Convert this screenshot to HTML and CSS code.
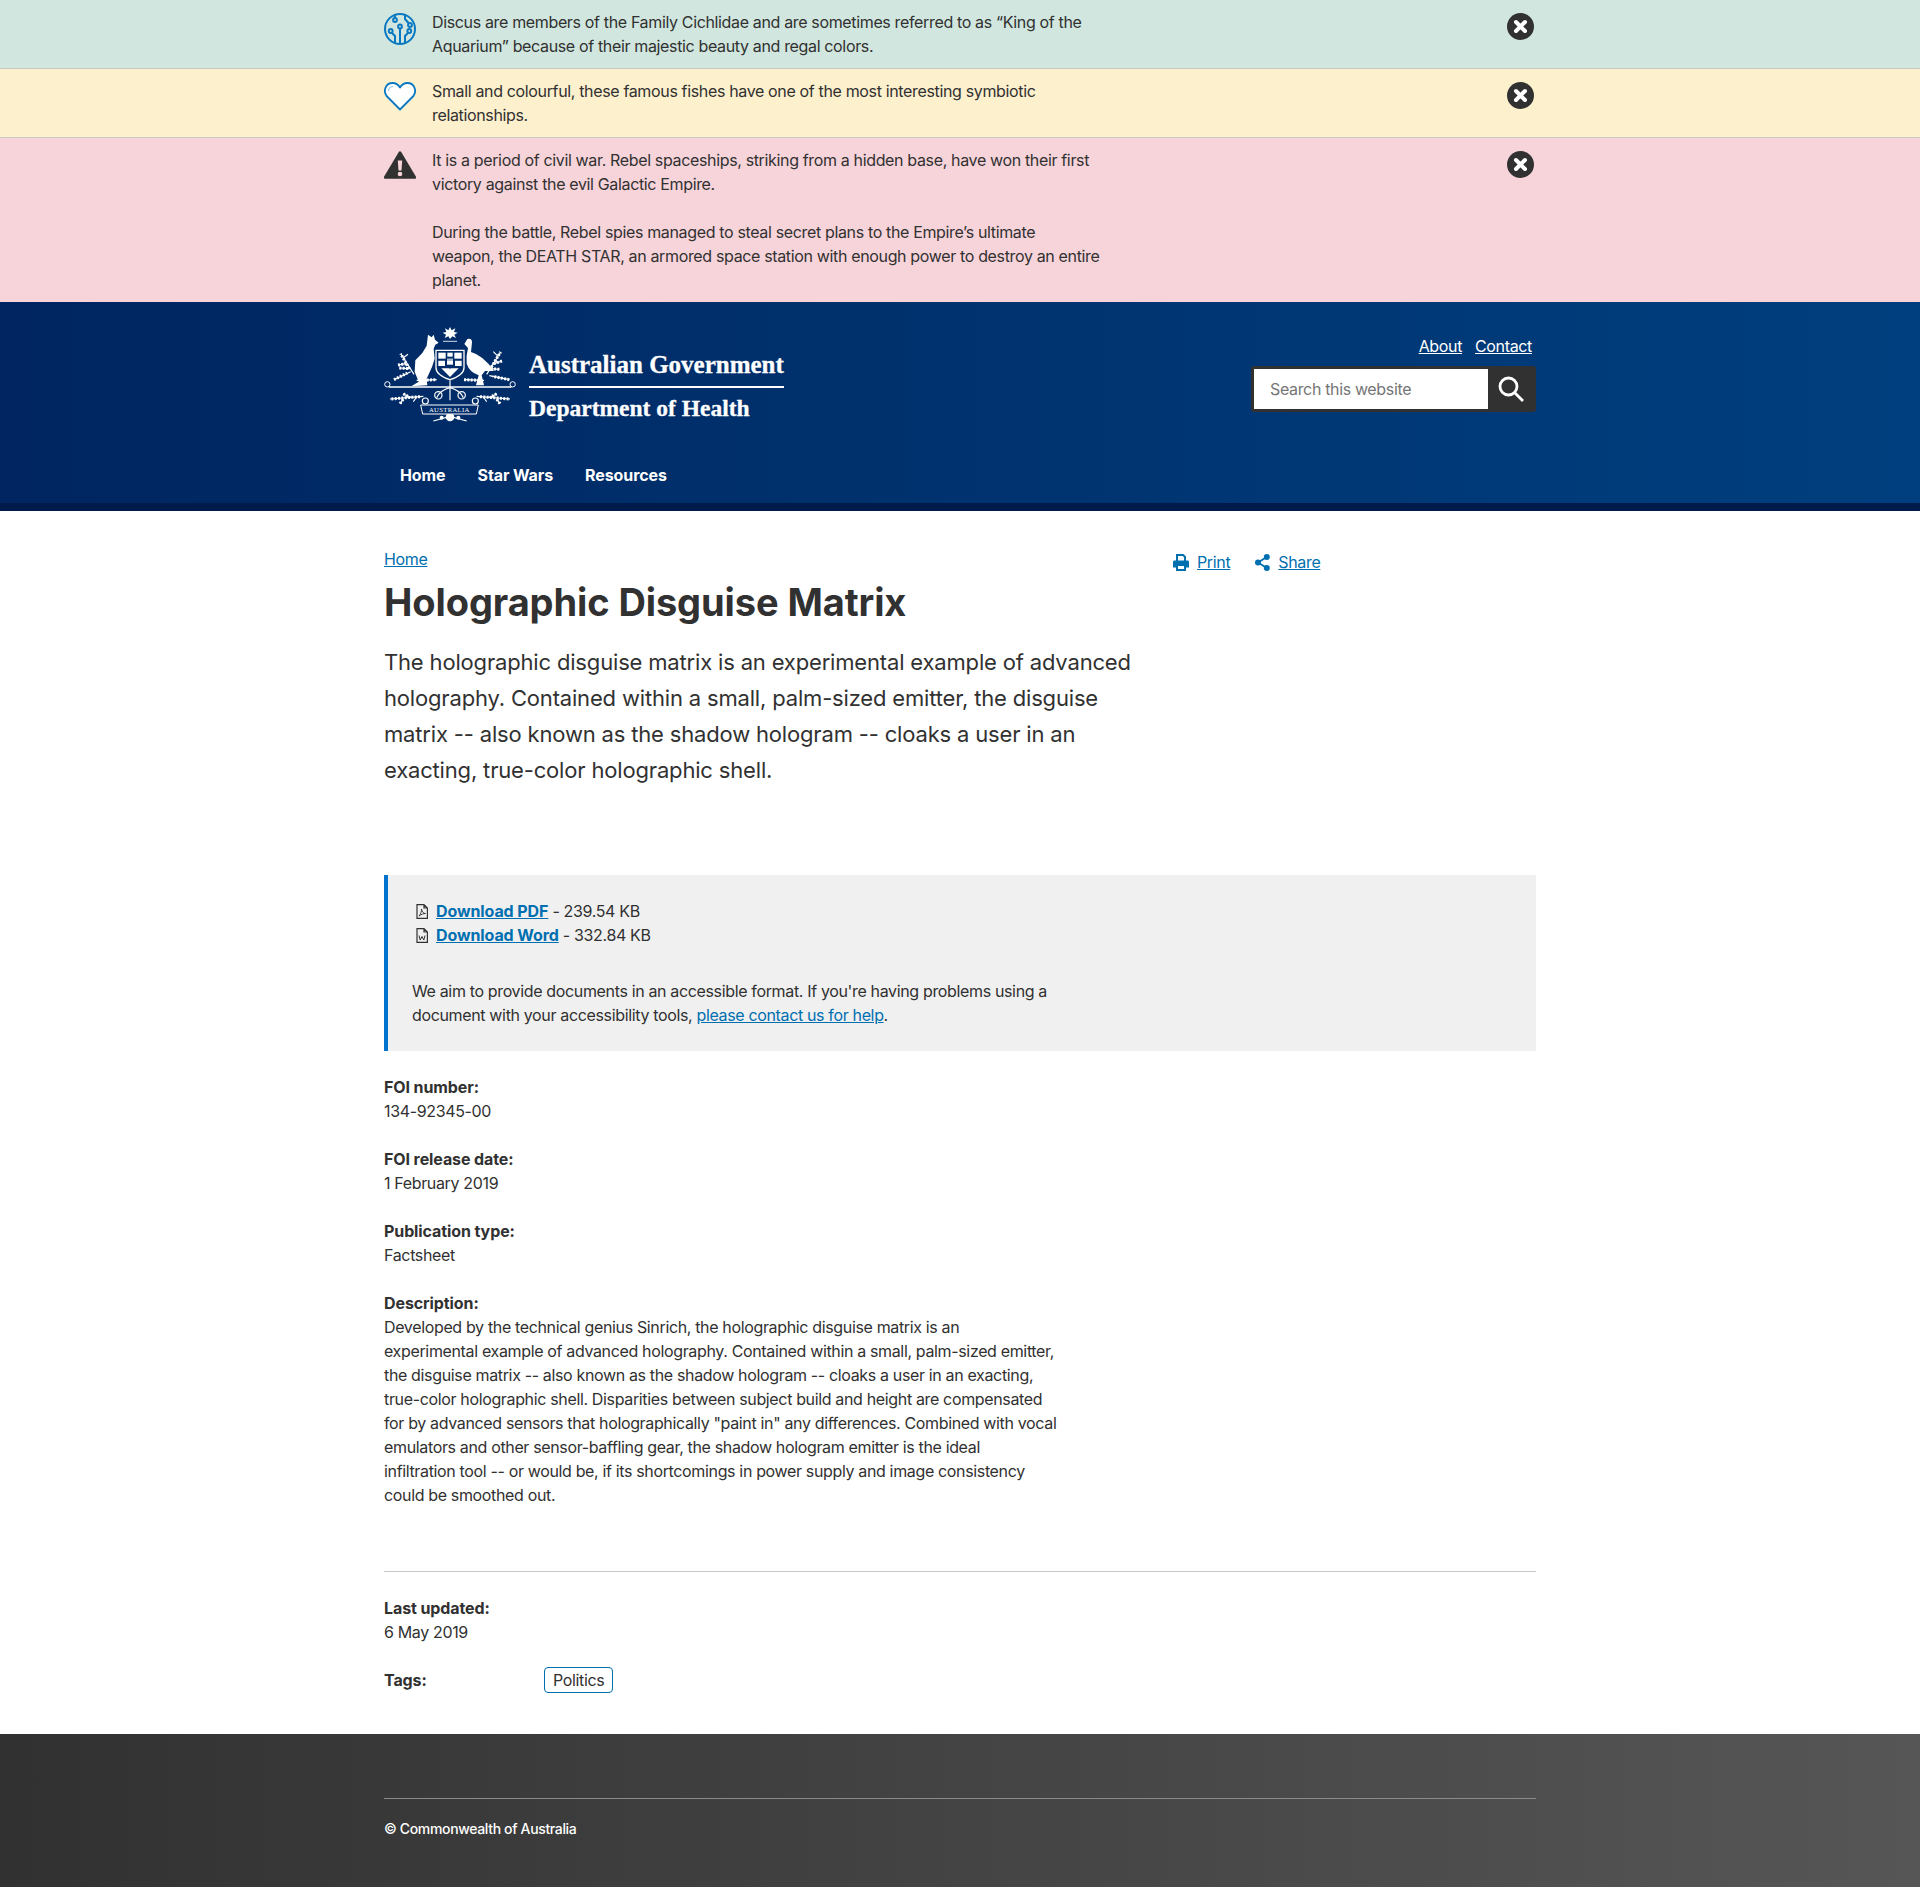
FILE: index.html
```html
<!DOCTYPE html>
<html lang="en">
<head>
    <meta charset="UTF-8">
    <meta name="viewport" content="width=device-width, initial-scale=1.0">
    <title>Holographic Disguise Matrix</title>
    <link rel="stylesheet" href="styles.css">
</head>
<body>

    <div class="alert alert-green">
        <div class="container alert-row">
            <svg class="alert-icon" viewBox="0 0 32 32" fill="none" stroke="#0b78c2" stroke-width="2">
                <circle cx="16" cy="16" r="15"/>
                <path d="M16 15v16M11 30V23l-3-3M21 30V23l3-3M11 1v4M21 1v5l3.500 4"/>
                <circle cx="16" cy="13.500" r="1.900"/><circle cx="6.700" cy="18" r="1.900"/><circle cx="25.300" cy="18" r="1.900"/>
                <circle cx="11" cy="7" r="1.900"/><circle cx="26" cy="12" r="1.900"/>
            </svg>
            <div class="alert-text">
                <p>Discus are members of the Family Cichlidae and are sometimes referred to as “King of the Aquarium” because of their majestic beauty and regal colors.</p>
            </div>
            <svg class="alert-close" viewBox="0 0 27 27"><circle cx="13.500" cy="13.500" r="13.500" fill="#313131"/><path d="M9 9l9 9M18 9l-9 9" stroke="#fff" stroke-width="4" stroke-linecap="round"/></svg>
        </div>
    </div>

    <div class="alert alert-yellow">
        <div class="container alert-row">
            <svg class="alert-icon" viewBox="0 0 32 32">
                <path d="M16 27.500L2.600 14C-1 9 1.500 1 8.500 1c3.500 0 6 2 7.500 4.500C17.500 3 20 1 23.500 1c7 0 9.500 8 5.900 13Z" fill="#fff" stroke="#0b78c2" stroke-width="1.800" stroke-linejoin="round"/>
                <path d="M4.500 9c0-2.500 2-4.500 4.500-4.500" fill="none" stroke="#8fc4e6" stroke-width="1.200"/>
            </svg>
            <div class="alert-text">
                <p>Small and colourful, these famous fishes have one of the most interesting symbiotic relationships.</p>
            </div>
            <svg class="alert-close" viewBox="0 0 27 27"><circle cx="13.500" cy="13.500" r="13.500" fill="#313131"/><path d="M9 9l9 9M18 9l-9 9" stroke="#fff" stroke-width="4" stroke-linecap="round"/></svg>
        </div>
    </div>

    <div class="alert alert-red">
        <div class="container alert-row">
            <svg class="alert-icon" viewBox="0 0 32 32">
                <path d="M16 1.500L31 26.500H1Z" fill="#313131" stroke="#313131" stroke-width="2.500" stroke-linejoin="round"/>
                <path d="M13.800 9.500h4.400l-.7 10h-3Z" fill="#f7d4da"/><circle cx="16" cy="23" r="2.300" fill="#f7d4da"/>
            </svg>
            <div class="alert-text">
                <p>It is a period of civil war. Rebel spaceships, striking from a hidden base, have won their first victory against the evil Galactic Empire.</p>
                <p>During the battle, Rebel spies managed to steal secret plans to the Empire’s ultimate weapon, the DEATH STAR, an armored space station with enough power to destroy an entire planet.</p>
            </div>
            <svg class="alert-close" viewBox="0 0 27 27"><circle cx="13.500" cy="13.500" r="13.500" fill="#313131"/><path d="M9 9l9 9M18 9l-9 9" stroke="#fff" stroke-width="4" stroke-linecap="round"/></svg>
        </div>
    </div>

    <header class="site-header">
        <div class="container header-top">
            <div class="logo">
                <!-- Wappen grob von Hand gezeichnet, Koordinaten aus dem Zoom -->
                <svg class="crest" viewBox="42 80 396 288">
                    <polygon fill="#fff" points="240,80 245,90 256,84 252,95 263,97 253,103 258,113 247,108 240,116 235,108 224,113 228,103 218,97 229,95 225,84 235,90"/>
                    <path d="M220 123h40" stroke="#fff" stroke-width="4" stroke-dasharray="4 2"/>
                    <!-- Kaenguru -->
                    <path fill="#fff" d="M174 103l11 8 6-8 4 15 11 9-10 6-5 12 3 30-8 25-16 35 2 20-48 3 22-14-12-30 2-34 21-22 13-22Z"/>
                    <!-- Emu -->
                    <path fill="#fff" d="M283 131l9-15q13-4 14 9l-3 30q37 10 69 57h-27l-10 13 7 30h-24l8-30q-28-10-36-35-2-25 4-47Z"/>
                    <!-- Schild -->
                    <path d="M198 150h84v52q0 22-42 36-42-14-42-36Z" fill="#002d69" stroke="#fff" stroke-width="4"/>
                    <g fill="#fff">
                        <rect x="205" y="157" width="22" height="18"/><rect x="232" y="157" width="16" height="12"/><rect x="253" y="157" width="22" height="18"/>
                        <rect x="205" y="181" width="20" height="16"/><rect x="231" y="175" width="18" height="18"/><rect x="255" y="181" width="20" height="16"/>
                        <path d="M214 204h52l-26 26Z"/>
                    </g>
                    <path d="M205 179h70M240 197v10" stroke="#002d69" stroke-width="2"/>
                    <!-- Band mit Schlaufen -->
                    <path d="M56 260H424" stroke="#fff" stroke-width="5"/>
                    <circle cx="52" cy="252" r="8" fill="none" stroke="#fff" stroke-width="3"/>
                    <circle cx="428" cy="252" r="8" fill="none" stroke="#fff" stroke-width="3"/>
                    <!-- Zweige -->
                    <g fill="none" stroke="#fff" stroke-width="3.500">
                        <path d="M132 222L92 160M108 190l-24 4M118 205l-30-2M100 172l14-10M122 214l-50 24"/>
                        <path d="M350 222L392 155M372 190l24-8M362 205l26 2M384 168l-14-14M358 226l60 12"/>
                        <path d="M240 240V300M240 262q-30 8-40 30M240 262q30 8 40 30M200 238l-60 2M282 238l60 2"/>
                        <path d="M160 288L60 296M120 292l-20-12M100 296l-10 14M140 290l-10 14"/>
                        <path d="M320 288L420 296M360 292l20-12M380 296l10 14M340 290l10 14"/>
                        <circle cx="166" cy="302" r="9"/><circle cx="316" cy="302" r="9"/><circle cx="205" cy="285" r="11"/><circle cx="275" cy="285" r="11"/>
                        <path d="M190 362l50-14 50 14"/>
                    </g>
                    <!-- Blaetter als gestrichelte Linien -->
                    <g fill="none" stroke="#fff" stroke-width="9" stroke-dasharray="6 4">
                        <path d="M118 205L92 160M84 194l24-4M88 203l30 2M72 238l40-20"/>
                        <path d="M364 200L392 155M396 182l-24 8M388 207l-26-2M418 238l-50-10"/>
                        <path d="M150 240l50-2M282 238l50 2"/>
                        <path d="M150 289L60 296M100 280l20 12M90 310l10-14"/>
                        <path d="M330 289L420 296M380 280l-20 12M390 310l-10-14"/>
                    </g>
                    <g fill="#fff">
                        <circle cx="240" cy="350" r="13"/>
                        <circle cx="215" cy="352" r="6"/><circle cx="265" cy="352" r="6"/>
                    </g>
                    <path d="M152 314H325l-6 27H158Z" fill="#002d69" stroke="#fff" stroke-width="3"/>
                    <text class="crest-motto" x="238" y="335" text-anchor="middle">AUSTRALIA</text>
                </svg>
                <div class="logo-text">
                    <div class="logo-gov">Australian Government</div>
                    <div class="logo-dept">Department of Health</div>
                </div>
            </div>
            <div class="header-right">
                <div class="header-links">
                    <a href="#">About</a>
                    <a href="#">Contact</a>
                </div>
                <form class="search">
                    <input type="text" placeholder="Search this website">
                    <button type="button" aria-label="Search">
                        <svg viewBox="0 0 26 26" fill="none" stroke="#fff" stroke-width="2.800"><circle cx="10.500" cy="10.500" r="8.500"/><path d="M16.500 16.500L25 25"/></svg>
                    </button>
                </form>
            </div>
        </div>
        <nav class="container main-nav">
            <a href="#">Home</a>
            <a href="#">Star Wars</a>
            <a href="#">Resources</a>
        </nav>
        <div class="header-bar"></div>
    </header>

    <main class="container content">
        <div class="top-row">
            <div class="top-main">
                <a class="breadcrumb" href="#">Home</a>
                <h1>Holographic Disguise Matrix</h1>
                <p class="lede">The holographic disguise matrix is an experimental example of advanced holography. Contained within a small, palm-sized emitter, the disguise matrix -- also known as the shadow hologram -- cloaks a user in an exacting, true-color holographic shell.</p>
            </div>
            <div class="page-actions">
                <a href="#">
                    <svg class="icon-print" viewBox="0 0 16 17" fill="#006fb0"><path d="M3 0h7.500L13 2.500V7h-2V3.300L9.700 2H5v5H3Z"/><path fill-rule="evenodd" d="M1.500 6.500C.6 6.500 0 7.100 0 8v5.500h3V17h10v-3.500h3V8c0-.9-.6-1.500-1.500-1.500ZM5 12h6v3H5Z"/></svg>
                    <span>Print</span>
                </a>
                <a href="#">
                    <svg class="icon-share" viewBox="0 0 15 17" fill="#006fb0"><circle cx="3" cy="8.500" r="3"/><circle cx="11.800" cy="3" r="3"/><circle cx="11.800" cy="14" r="3"/><path d="M3 8.500L11.800 3M3 8.500L11.800 14" stroke="#006fb0" stroke-width="1.800"/></svg>
                    <span>Share</span>
                </a>
            </div>
        </div>

        <section class="downloads">
            <ul>
                <li><svg viewBox="0 0 12 15" fill="none" stroke="#313131" stroke-width="1.200"><path d="M1 .6h7l3.400 3.400v10.400H1ZM8 .6V4h3.400"/><path d="M3 12c2-2 2.500-5 2.500-7 .5 3 2 4.500 4 4.500-2 0-4 .8-6.500 2.500Z" stroke-width=".9"/></svg><a href="#">Download PDF</a> - 239.54 KB</li>
                <li><svg viewBox="0 0 12 15" fill="none" stroke="#313131" stroke-width="1.200"><path d="M1 .6h7l3.400 3.400v10.400H1ZM8 .6V4h3.400"/><path d="M3 7.500l1.200 4.500L6 8.500 7.800 12 9 7.500" stroke-width="1"/></svg><a href="#">Download Word</a> - 332.84 KB</li>
            </ul>
            <p>We aim to provide documents in an accessible format. If you're having problems using a document with your accessibility tools, <a href="#">please contact us for help</a>.</p>
        </section>

        <dl class="meta">
            <dt>FOI number:</dt>
            <dd>134-92345-00</dd>
            <dt>FOI release date:</dt>
            <dd>1 February 2019</dd>
            <dt>Publication type:</dt>
            <dd>Factsheet</dd>
            <dt>Description:</dt>
            <dd>Developed by the technical genius Sinrich, the holographic disguise matrix is an<br>experimental example of advanced holography. Contained within a small, palm-sized emitter, the disguise matrix -- also known as the shadow hologram -- cloaks a user in an exacting, true-color holographic shell. Disparities between subject build and height are compensated for by advanced sensors that holographically "paint in" any differences. Combined with vocal emulators and other sensor-baffling gear, the shadow hologram emitter is the ideal<br>infiltration tool -- or would be, if its shortcomings in power supply and image consistency could be smoothed out.</dd>
        </dl>

        <hr class="divider">

        <div class="updated">
            <strong>Last updated:</strong>
            <div>6 May 2019</div>
        </div>
        <div class="tags">
            <strong>Tags:</strong>
            <a class="tag" href="#">Politics</a>
        </div>
    </main>

    <footer class="site-footer">
        <div class="container">
            <div class="footer-inner">© Commonwealth of Australia</div>
        </div>
    </footer>

</body>
</html>
```

FILE: styles.css
```css
* {
    box-sizing: border-box;
}

body {
    margin: 0;
    font-family: Inter, "Liberation Sans", sans-serif;
    font-size: 16px;
    line-height: 24px;
    letter-spacing: -0.35px; /* Inter hier etwas breiter als im Bild */
    color: #313131;
    background-color: #ffffff;
}

a {
    color: #006fb0;
}

strong,
dt {
    font-weight: 700;
    letter-spacing: -0.1px;
}

.container {
    width: 1152px;
    margin: 0 auto;
}

/* Hinweise oben */
.alert {
    padding: 10px 0;
    border-bottom: 1px solid #c9c9c9;
}

.alert-green {
    background-color: #d0e6de;
}

.alert-yellow {
    background-color: #fdf0cd;
}

.alert-red {
    background-color: #f7d4da;
    border-bottom: none;
}

.alert-row {
    display: flex;
    align-items: flex-start;
}

.alert-icon {
    width: 32px;
    height: 32px;
    margin: 3px 16px 0 0;
    flex-shrink: 0;
}

.alert-text {
    width: 669px;
    flex-shrink: 0;
}

.alert-text p {
    margin: 0 0 24px;
}

.alert-text p:last-child {
    margin-bottom: 0;
}

.alert-close {
    width: 27px;
    height: 27px;
    margin: 3px 2px 0 auto;
}

/* Kopfbereich */
.site-header {
    height: 209px;
    padding-top: 24px;
    background: linear-gradient(90deg, #002560 0%, #00306c 40%, #003f7f 100%);
    color: #ffffff;
    display: flex;
    flex-direction: column;
}

.header-top {
    display: flex;
    justify-content: space-between;
}

.logo {
    display: flex;
    align-items: flex-start;
}

.crest {
    width: 132px;
    height: 96px;
    margin-top: 1px;
}

.crest-motto {
    font-family: "Liberation Serif", serif;
    font-size: 20px;
    letter-spacing: 1px;
    fill: #ffffff;
}

.logo-text {
    margin: 24px 0 0 13px;
    font-family: "Liberation Serif", serif;
    font-weight: bold;
    line-height: 30px;
    letter-spacing: 0;
    -webkit-text-stroke: 0.3px #ffffff;
}

.logo-gov {
    font-size: 25px;
    padding-bottom: 6px;
    border-bottom: 2px solid #ffffff;
}

.logo-dept {
    font-size: 23.500px;
    padding-top: 5px;
}

.header-right {
    display: flex;
    flex-direction: column;
    align-items: flex-end;
    padding-top: 8px;
}

.header-links {
    display: flex;
    gap: 13px;
    padding-right: 4px;
    margin-bottom: 8px;
}

.header-links a {
    color: #ffffff;
}

.search {
    display: flex;
    width: 285px;
    height: 46px;
    border: 3px solid #313131;
    border-radius: 3px;
    background-color: #313131;
}

.search input {
    width: 234px;
    border: none;
    padding: 0 16px;
    font-family: inherit;
    font-size: 16px;
    letter-spacing: -0.35px;
    color: #313131;
    background-color: #ffffff;
}

.search input::placeholder {
    color: #757575;
}

.search button {
    flex: 1;
    padding: 0;
    border: none;
    background: none;
    display: flex;
    align-items: center;
    justify-content: center;
}

.search svg {
    width: 26px;
    height: 26px;
}

.main-nav {
    display: flex;
    margin-top: 40px;
}

.main-nav a {
    padding: 0 16px;
    color: #ffffff;
    font-weight: 700;
    letter-spacing: -0.1px;
    text-decoration: none;
}

.header-bar {
    height: 8px;
    margin-top: auto;
    background-color: #001a4c;
}

/* Inhalt */
.content {
    padding-top: 36px;
}

.top-row {
    display: flex;
}

.top-main {
    width: 768px;
}

.breadcrumb {
    display: block;
}

h1 {
    margin: 7px 0 18px;
    font-size: 38px;
    line-height: 48px;
    letter-spacing: -0.1px;
    font-weight: 700;
}

.lede {
    margin: 0;
    font-size: 22px;
    line-height: 36px;
    letter-spacing: -0.17px;
}

.page-actions {
    display: flex;
    gap: 25px;
    margin: 3px 0 0 21px;
    height: 24px;
}

.page-actions a {
    display: flex;
    align-items: center;
    text-decoration: none;
}

.page-actions span {
    text-decoration: underline;
}

.icon-print {
    width: 16px;
    height: 17px;
    margin-right: 8px;
}

.icon-share {
    width: 15px;
    height: 17px;
    margin-right: 8px;
}

.downloads {
    margin-top: 87px;
    padding: 24px;
    background-color: #f0f0f0;
    border-left: 4px solid #0073cf;
}

.downloads ul {
    margin: 0 0 32px;
    padding: 0;
    list-style: none;
}

.downloads li svg {
    width: 12px;
    height: 15px;
    margin: 0 8px 0 4px;
    vertical-align: -2px;
}

.downloads li a {
    font-weight: 700;
    letter-spacing: -0.1px;
}

.downloads p {
    width: 680px;
    margin: 0;
}

.meta {
    margin: 24px 0 0;
}

.meta dd {
    width: 676px;
    margin: 0 0 24px;
}

.divider {
    margin: 64px 0 0;
    border: none;
    border-top: 1px solid #c8c8c8;
}

.updated {
    margin-top: 24px;
}

.tags {
    display: flex;
    align-items: center;
    margin-top: 24px;
    height: 24px;
}

.tags strong {
    width: 160px;
}

.tag {
    padding: 0 8px;
    border: 1px solid #006fb0;
    border-radius: 4px;
    color: #313131;
    text-decoration: none;
    line-height: 24px;
}

/* Fusszeile */
.site-footer {
    margin-top: 42px;
    height: 155px;
    padding-top: 64px;
    background: linear-gradient(90deg, #313131 0%, #565656 100%);
    color: #ffffff;
}

.footer-inner {
    border-top: 1px solid #8a8a8a;
    padding-top: 18px;
    font-size: 14px;
    font-weight: 500;
}
```
